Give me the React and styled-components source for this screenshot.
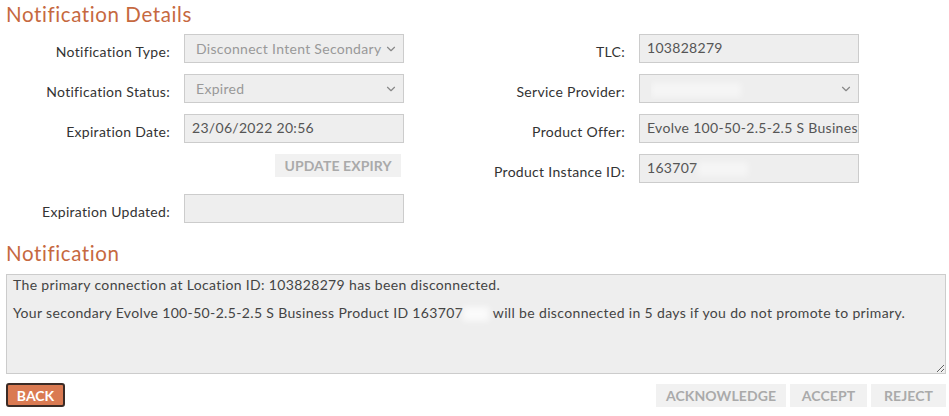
import React from 'react';
import styled, { createGlobalStyle } from 'styled-components';
import { ChevronDown } from 'lucide-react';

const GlobalStyle = createGlobalStyle`
  body {
    margin: 0;
    background: #fff;
    font-family: Lato, "Open Sans", sans-serif;
    letter-spacing: 0.3px;
  }
`

const Page = styled.div`
  padding: 0 3px 0 6px;
  width: 940px;
`

const SectionTitle = styled.h2`
  margin: ${props => props.top || '2px'} 0 ${props => props.bottom || '8px'};
  font-size: 20.5px;
  line-height: 24px;
  font-weight: 400;
  letter-spacing: 0.6px;
  color: #c6693f;
`

const Details = styled.div`
  display: flex;
  gap: 57px;
`

const Column = styled.div`
  display: grid;
  grid-template-columns: 164px 220px;
  grid-auto-rows: 29px;
  column-gap: 14px;
  row-gap: 11px;
`

const Label = styled.div`
  text-align: right;
  font-size: 14px;
  line-height: 20px;
  padding-top: 8px;
  color: #333;
  white-space: nowrap;
`

const Field = styled.div`
  box-sizing: border-box;
  height: 29px;
  background: #eee;
  border: 1px solid #ccc;
  padding: 3px 7px 0;
  font-size: 14px;
  line-height: 20px;
  color: ${props => props.muted ? '#999' : '#555'};
  white-space: nowrap;
  overflow: hidden;
`

const SelectBox = styled(Field)`
  display: flex;
  align-items: flex-start;
  padding: 4px 5px 0 11px;
`

const SelectValue = styled.span`
  flex: 1;
  overflow: hidden;
`

const Chevron = styled(ChevronDown)`
  flex: none;
  margin-top: 3px;
  color: #888;
`

const Redacted = styled.span`
  display: inline-block;
  width: ${props => props.width}px;
  height: 14px;
  vertical-align: middle;
  background: rgba(255, 255, 255, ${props => props.faint ? 0.45 : 0.75});
  filter: blur(3px);
`

const GhostButton = styled.button`
  width: ${props => props.width}px;
  height: 23px;
  padding: 0;
  border: none;
  background: #f1f1f1;
  color: #aaa;
  font-family: inherit;
  font-size: 14px;
  font-weight: 700;
  letter-spacing: 0.1px;
  text-transform: uppercase;
  white-space: nowrap;
`

const ExpiryButton = styled(GhostButton)`
  grid-column: 2;
  justify-self: end;
  align-self: start;
  margin-right: 3px;
`

const NoteBox = styled.div`
  box-sizing: border-box;
  height: 100px;
  border: 1px solid #ccc;
  background: #eee;
  padding: 0 6px;
  overflow: auto;
  resize: vertical;
  color: #444;
  font-size: 14px;
  line-height: 20px;
  letter-spacing: 0.35px;
`

const NoteLine = styled.p`
  margin: 0 0 8px;
  white-space: nowrap;
`

const Footer = styled.div`
  display: flex;
  justify-content: space-between;
  align-items: flex-start;
  margin-top: 9px;
`

const BackButton = styled.button`
  box-sizing: border-box;
  width: 59px;
  height: 24px;
  border: 2px solid #3b2b26;
  border-radius: 3px;
  background: #da7a52;
  color: #fff;
  font-family: inherit;
  font-size: 14px;
  font-weight: 700;
`

const Actions = styled.div`
  display: flex;
  gap: 4px;
  padding-top: 1px;
`

function Select({ value, muted, children }) {
  return (
    <SelectBox muted={muted}>
      <SelectValue>{value}{children}</SelectValue>
      <Chevron size={14} strokeWidth={2} />
    </SelectBox>
  );
}

export default function App() {
  return (
    <Page>
      <GlobalStyle />
      <SectionTitle>Notification Details</SectionTitle>
      <Details>
        <Column>
          <Label>Notification Type:</Label>
          <Select muted value="Disconnect Intent Secondary" />
          <Label>Notification Status:</Label>
          <Select muted value="Expired" />
          <Label>Expiration Date:</Label>
          <Field>23/06/2022 20:56</Field>
          <ExpiryButton width={126}>Update Expiry</ExpiryButton>
          <Label>Expiration Updated:</Label>
          <Field />
        </Column>
        <Column>
          <Label>TLC:</Label>
          <Field>103828279</Field>
          <Label>Service Provider:</Label>
          <Select value=""><Redacted faint width={90} /></Select>
          <Label>Product Offer:</Label>
          <Field>Evolve 100-50-2.5-2.5 S Business</Field>
          <Label>Product Instance ID:</Label>
          <Field>163707<Redacted faint width={50} /></Field>
        </Column>
      </Details>
      <SectionTitle top="18px" bottom="9px">Notification</SectionTitle>
      <NoteBox>
        <NoteLine>The primary connection at Location ID: 103828279 has been disconnected.</NoteLine>
        <NoteLine>
          Your secondary Evolve 100-50-2.5-2.5 S Business Product ID 163707<Redacted width={26} />  will be disconnected in 5 days if you do not promote to primary.
        </NoteLine>
      </NoteBox>
      <Footer>
        <BackButton>BACK</BackButton>
        <Actions>
          <GhostButton width={130}>Acknowledge</GhostButton>
          <GhostButton width={77}>Accept</GhostButton>
          <GhostButton width={75}>Reject</GhostButton>
        </Actions>
      </Footer>
    </Page>
  );
}
